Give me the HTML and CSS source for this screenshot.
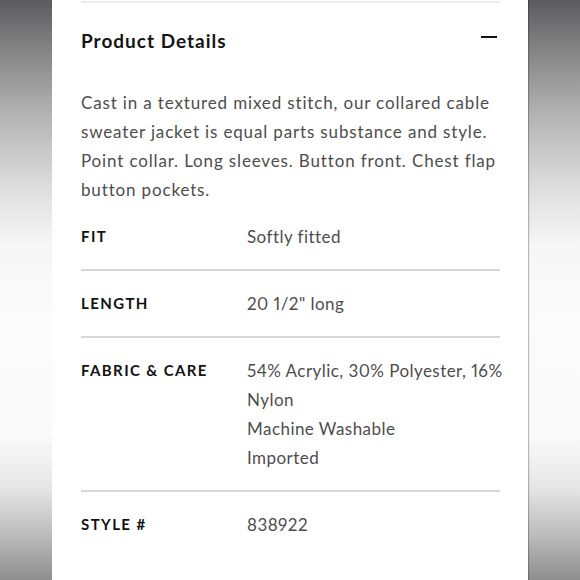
FILE: index.html
```html
<!DOCTYPE html>
<html>
<head>
<meta charset="utf-8">
<link rel="stylesheet" href="styles.css">
</head>
<body>
<div class="panel">
  <div class="section">
    <div class="header">
      <h2 class="title">Product Details</h2>
      <span class="toggle" aria-hidden="true"></span>
    </div>
    <p class="desc">Cast in a textured mixed stitch, our collared cable sweater jacket is equal parts substance and style. Point collar. Long sleeves. Button front. Chest flap button pockets.</p>
    <div class="row">
      <div class="label">FIT</div>
      <div class="value">Softly fitted</div>
    </div>
    <div class="row">
      <div class="label">LENGTH</div>
      <div class="value">20 1/2" long</div>
    </div>
    <div class="row">
      <div class="label">FABRIC &amp; CARE</div>
      <div class="value"><span class="nowrap">54% Acrylic, 30% Polyester, 16%</span><br>Nylon<br>Machine Washable<br>Imported</div>
    </div>
    <div class="row last">
      <div class="label">STYLE #</div>
      <div class="value">838922</div>
    </div>
  </div>
</div>
</body>
</html>
```
FILE: styles.css
```css
html, body {
  margin: 0;
  padding: 0;
}
body {
  width: 580px;
  height: 580px;
  overflow: hidden;
  display: flex;
  justify-content: center;
  background: linear-gradient(to bottom,
    #5c5c5e 0%,
    #8a8a8b 10%,
    #b4b4b4 20%,
    #dcdcdc 32%,
    #f6f6f6 42%,
    #fbfbfb 55%,
    #fafafa 75%,
    #e6e6e6 84%,
    #bdbdbd 92%,
    #8e8e8f 100%);
  font-family: "Lato", "Liberation Sans", sans-serif;
}
.panel {
  width: 476px;
  height: 580px;
  background: #fff;
  box-sizing: border-box;
  padding: 1px 28px 0 29px;
  box-shadow: 1px 0 1px rgba(0,0,0,0.25);
}
.section {
  border-top: 2px solid #ececec;
}
.header {
  display: flex;
  justify-content: space-between;
  align-items: center;
  height: 74px;
}
.title {
  margin: 0;
  font-size: 19px;
  font-weight: 700;
  letter-spacing: 1px;
  color: #141414;
}
.toggle {
  width: 16px;
  height: 2px;
  background: #111;
  margin: 0 3px 6px 0;
}
.desc {
  margin: 11px 0 0;
  font-size: 17px;
  line-height: 29px;
  letter-spacing: 0.85px;
  color: #4d4d4d;
}
.row {
  display: flex;
  padding: 18px 0;
  border-bottom: 2px solid #d8d8d8;
  line-height: 29px;
}
.row.last {
  border-bottom: none;
}
.label {
  width: 166px;
  flex: none;
  font-size: 15px;
  font-weight: 700;
  letter-spacing: 1.4px;
  color: #111;
}
.value {
  font-size: 17px;
  letter-spacing: 0.45px;
  font-variant-numeric: proportional-nums;
  color: #4d4d4d;
}
.nowrap {
  white-space: nowrap;
}
```
